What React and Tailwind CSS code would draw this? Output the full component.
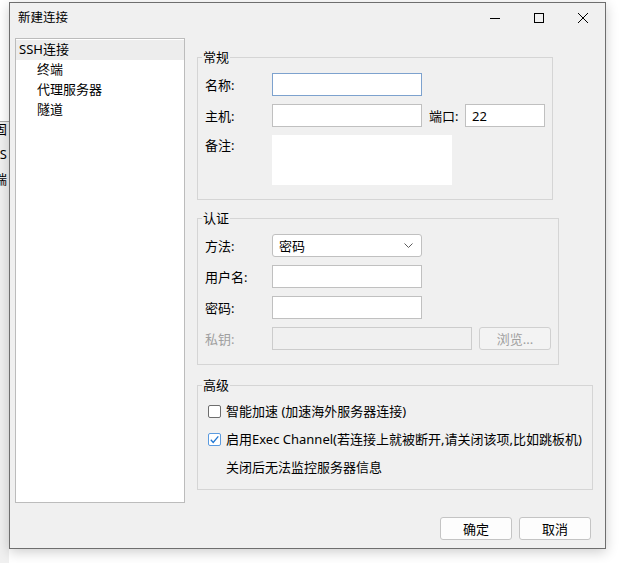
import React from "react";

const font = "font-['Noto_Sans','Noto_Sans_CJK_SC',sans-serif]";

function Field({ label, children, dim }) {
  return (
    <div className="flex items-center h-[23px]">
      <span className={`w-[67px] shrink-0 leading-[16px] ${dim ? "text-[#a0a0a0]" : "text-black"}`}>{label}</span>
      {children}
    </div>
  );
}

function Group({ title, width, className = "", children }) {
  return (
    <fieldset className={`border border-[#d5d5d5] ${width} ${className}`}>
      <legend className="ml-[4px] px-[1px] leading-[16px] text-black">{title}</legend>
      {children}
    </fieldset>
  );
}

function Box({ checked }) {
  return checked ? (
    <span className="w-[13px] h-[13px] shrink-0 border border-[#5b9be0] bg-white rounded-[2px] flex items-center justify-center">
      <svg width="11" height="11" viewBox="0 0 11 11" fill="none" stroke="#1f76d2" strokeWidth="1.3">
        <polyline points="1.8,5.8 4.2,8.4 9.3,2.3" />
      </svg>
    </span>
  ) : (
    <span className="w-[13px] h-[13px] shrink-0 border border-[#6d6d6d] bg-white rounded-[2px]" />
  );
}

export default function App() {
  return (
    <div className={`w-[628px] h-[563px] bg-white flex overflow-hidden text-[13px] ${font}`}>
      {/* bits of the app behind */}
      <div className="w-[9px] h-full flex flex-col overflow-hidden">
        <div className="h-[121px] bg-white" />
        <div className="h-px bg-[#a9a9a9]" />
        <div className="flex-1 bg-[#f0f0f0] flex flex-col gap-[11px] leading-[14px] text-[13px]">
          <div className="flex justify-end pr-[2px]"><span className="shrink-0">固</span></div>
          <div className="flex justify-end pr-[2px]"><span className="shrink-0">S</span></div>
          <div className="flex justify-end pr-[2px]"><span className="shrink-0">端</span></div>
        </div>
      </div>

      <div className="mt-[2px] w-[597px] h-[547px] shrink-0 border border-[#6e6e6e] bg-[#f0f0f0] flex flex-col shadow-[0_3px_12px_rgba(0,0,0,0.2)]">
        {/* title bar */}
        <div className="h-[30px] flex items-center">
          <span className="pl-[8px] text-[12.5px] text-black">新建连接</span>
          <div className="ml-auto flex h-full">
            <div className="w-[44px] flex items-center justify-center">
              <svg width="10" height="10" viewBox="0 0 10 10"><line x1="0" y1="5.5" x2="10" y2="5.5" stroke="#000" /></svg>
            </div>
            <div className="w-[44px] flex items-center justify-center">
              <svg width="10" height="10" viewBox="0 0 10 10"><rect x="0.5" y="0.5" width="9" height="9" fill="none" stroke="#000" /></svg>
            </div>
            <div className="w-[44px] flex items-center justify-center">
              <svg width="10" height="10" viewBox="0 0 10 10" stroke="#000"><line x1="0" y1="0" x2="10" y2="10" /><line x1="10" y1="0" x2="0" y2="10" /></svg>
            </div>
          </div>
        </div>

        {/* body */}
        <div className="pt-[5px] pl-[5px] flex">
          <div className="w-[170px] h-[465px] border border-[#bcbcbc] bg-white pt-[1px] text-black">
            <div className="h-[20px] flex items-center pl-[3px] bg-[#ededed]">SSH连接</div>
            <div className="h-[20px] flex items-center pl-[21px]">终端</div>
            <div className="h-[20px] flex items-center pl-[21px]">代理服务器</div>
            <div className="h-[20px] flex items-center pl-[21px]">隧道</div>
          </div>

          <div className="ml-[12px] pt-[11px] flex flex-col">
            <Group title="常规" width="w-[356px]">
              <div className="pl-[7px] pt-[8px] pb-[14px] flex flex-col gap-[8px]">
                <Field label="名称:">
                  <input className="w-[150px] h-[23px] border border-[#7da2ce] bg-white outline-none px-[5px]" />
                </Field>
                <Field label="主机:">
                  <input className="w-[150px] h-[23px] border border-[#c0c0c0] bg-white outline-none px-[5px]" />
                  <span className="ml-[7px] w-[36px] leading-[16px]">端口:</span>
                  <input defaultValue="22" className="w-[80px] h-[23px] border border-[#c0c0c0] bg-white outline-none px-[6px] text-black" />
                </Field>
                <div className="flex items-start h-[50px]">
                  <span className="w-[67px] shrink-0 leading-[20px]">备注:</span>
                  <textarea className="w-[180px] h-[50px] bg-white resize-none outline-none" />
                </div>
              </div>
            </Group>

            <Group title="认证" width="w-[362px]" className="mt-[10px]">
              <div className="pl-[7px] pt-[8px] pb-[14px] flex flex-col gap-[8px]">
                <Field label="方法:">
                  <div className="w-[150px] h-[23px] border border-[#c0c0c0] rounded-[3px] bg-white flex items-center pl-[6px] pr-[8px]">
                    <span className="leading-[16px]">密码</span>
                    <svg className="ml-auto" width="9" height="5" viewBox="0 0 9 5" fill="none" stroke="#5c5c5c">
                      <polyline points="0.5,0.5 4.5,4.5 8.5,0.5" />
                    </svg>
                  </div>
                </Field>
                <Field label="用户名:">
                  <input className="w-[150px] h-[23px] border border-[#c0c0c0] bg-white outline-none px-[5px]" />
                </Field>
                <Field label="密码:">
                  <input type="password" className="w-[150px] h-[23px] border border-[#c0c0c0] bg-white outline-none px-[5px]" />
                </Field>
                <Field label="私钥:" dim>
                  <div className="w-[200px] h-[23px] border border-[#cccccc] bg-[#f0f0f0]" />
                  <button className="ml-[7px] w-[72px] h-[23px] border border-[#d0d0d0] rounded-[3px] bg-[#f3f3f3] text-[#a0a0a0] leading-[16px]">
                    浏览...
                  </button>
                </Field>
              </div>
            </Group>

            <Group title="高级" width="w-[396px]" className="mt-[12px]">
              <div className="pl-[10px] pt-[4px] pb-[8px] flex flex-col text-black">
                <div className="h-[28px] flex items-center">
                  <Box />
                  <span className="ml-[5px] leading-[16px]">智能加速 (加速海外服务器连接)</span>
                </div>
                <div className="h-[28px] flex items-center">
                  <Box checked />
                  <span className="ml-[5px] leading-[16px] whitespace-nowrap">启用Exec Channel(若连接上就被断开,请关闭该项,比如跳板机)</span>
                </div>
                <div className="h-[28px] flex items-center pl-[18px]">
                  <span className="leading-[16px]">关闭后无法监控服务器信息</span>
                </div>
              </div>
            </Group>
          </div>
        </div>

        {/* footer */}
        <div className="mt-[14px] pr-[14px] flex justify-end gap-[7px]">
          <button className="w-[72px] h-[23px] border border-[#c4c4c4] rounded-[3px] bg-[#fdfdfd] text-black leading-[16px]">确定</button>
          <button className="w-[72px] h-[23px] border border-[#c4c4c4] rounded-[3px] bg-[#fdfdfd] text-black leading-[16px]">取消</button>
        </div>
      </div>
    </div>
  );
}
